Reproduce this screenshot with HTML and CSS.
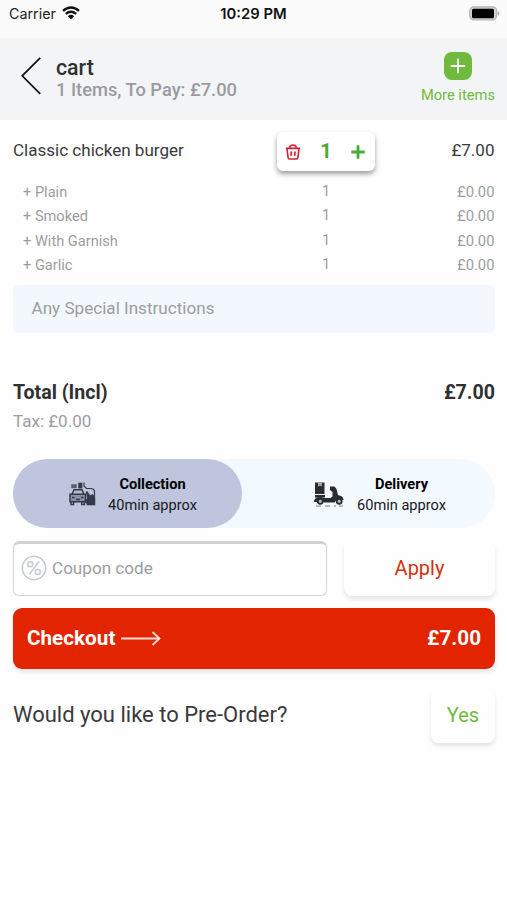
FILE: index.html
```html
<!DOCTYPE html>
<html lang="en">
<head>
<meta charset="utf-8">
<title>Cart</title>
<link rel="stylesheet" href="styles.css">
</head>
<body>
<div class="status">
  <div class="carrier"><span>Carrier</span>
    <svg width="18" height="14" viewBox="0 0 18 14" fill="none" stroke="#111" stroke-width="2.3"><path d="M1 4.9Q9-2 17 4.9M3.8 7.9Q9 3.6 14.2 7.9"/><path d="M5.9 10.2Q9 7.5 12.1 10.2L9 13.4Z" fill="#111" stroke="none"/></svg>
  </div>
  <time class="time">10:29 PM</time>
  <svg class="battery" width="31" height="15" viewBox="0 0 31 15"><rect x=".8" y=".8" width="26.8" height="13.2" rx="4" fill="#cfcfcf" stroke="#b5b5b5" stroke-width="1.2"/><rect x="3" y="2.8" width="22" height="9.4" rx="1.5" fill="#000"/><path d="M28.8 5v5q1.7-.8 1.7-2.5T28.8 5" fill="#aaa"/></svg>
</div>
<header class="header">
  <svg class="back" width="20" height="38" viewBox="0 0 20 38" fill="none" stroke="#111" stroke-width="1.7"><path d="M19.2.8 1.2 18.8l18 18"/></svg>
  <div class="heading"><h1>cart</h1><p class="subtitle">1 Items, To Pay: £7.00</p></div>
  <div class="more">
    <svg width="28" height="28" viewBox="0 0 28 28"><rect width="28" height="28" rx="8" fill="#70bb3e"/><path d="M14 7.5v13M7.5 14h13" stroke="#fff" stroke-width="1.8" stroke-linecap="round"/></svg>
    <span class="more-text">More items</span>
  </div>
</header>
<main>
  <section class="item">
    <span class="item-name">Classic chicken burger</span>
    <div class="stepper">
      <svg width="16" height="16" viewBox="0 0 16 16" fill="none" stroke="#cf2334" stroke-width="1.6" stroke-linejoin="round"><path d="M.8 4.4h14.4M4.4 4.2Q4.8 1 8 1t3.6 3.2M2 4.6l1.1 9q.2 1.4 1.5 1.4h6.8q1.3 0 1.5-1.4l1.1-9"/><path d="M6.2 7.6v4.2M9.8 7.6v4.2" stroke-width="1.8"/></svg>
      <b class="count">1</b>
      <svg width="14" height="14" viewBox="0 0 14 14"><path d="M7 .3v13.4M.3 7h13.4" stroke="#4eaa37" stroke-width="2.8"/></svg>
    </div>
    <span class="item-price">£7.00</span>
  </section>
  <ul class="extras">
    <li><span>+ Plain</span><span class="qty">1</span><span class="extra-price">£0.00</span></li>
    <li><span>+ Smoked</span><span class="qty">1</span><span class="extra-price">£0.00</span></li>
    <li><span>+ With Garnish</span><span class="qty">1</span><span class="extra-price">£0.00</span></li>
    <li><span>+ Garlic</span><span class="qty">1</span><span class="extra-price">£0.00</span></li>
  </ul>
  <div class="instructions"><span>Any Special Instructions</span></div>
  <div class="total"><span class="total-label">Total (Incl)</span><span class="total-price">£7.00</span></div>
  <div class="tax"><span>Tax: £0.00</span></div>
  <div class="modes">
    <div class="mode collection">
      <svg width="27" height="24" viewBox="0 0 27 24" fill="none" stroke="#353a49" stroke-width="1.5"><path d="M3 12.2 5 7.8h8l2 4.4" fill="#b4bbd0"/><path d="M1 12.2h15.5v7.5H1Z" fill="#8a91a4"/><path d="M2 20v2.5h2.6V20M12.8 20v2.5h2.6V20M3 15.5h2.5M12 15.5h2.5M7 17.5h4"/><path d="M3 3h4v2.6H3Z" fill="#596072" stroke="#596072"/><path d="M10 1.5h2.6v4.2H10Z" fill="#353a49"/><path d="M15 .5v3.5l2.5 2.5h5q3 .5 3 3.5v6" stroke-width="1.2"/><path d="m17.5 9.5 3.5 5 2.5-1.5 2 3v6.5h-7l-2-4 2.5-2Z" fill="#353a49"/></svg>
      <div class="mode-text"><b class="mode-name">Collection</b><span class="mode-time">40min approx</span></div>
    </div>
    <div class="mode delivery">
      <svg width="30" height="25" viewBox="0 0 30 25"><path d="M1 .5h9.5V12H1Z" fill="#292d30"/><path d="M4 .5h3.8v4L6 3.6 4 4.5Z" fill="#a7afb5"/><path d="M1 13h10v2.5H1Z" fill="#292d30"/><path d="M16 4.5h4.5l2 2.5 1.5 6 4 1.5q1.5 1.2 1.5 3.5h-7l-2 2.5H10L9 16h7.5l2-1.5V10L16 8Z" fill="#292d30"/><path d="M0 19q1-4 6-4 5 0 5 5H0" fill="#292d30"/><circle cx="6.3" cy="19.3" r="2.5" fill="#b6bec4" stroke="#292d30" stroke-width="1.8"/><circle cx="25.2" cy="19.3" r="2.5" fill="#b6bec4" stroke="#292d30" stroke-width="1.8"/><path d="M2 24h5m4 0h5m4 0h2m3 0h4" stroke="#7d8388" stroke-width="1.1"/></svg>
      <div class="mode-text"><b class="mode-name">Delivery</b><span class="mode-time">60min approx</span></div>
    </div>
  </div>
  <div class="coupon-row">
    <div class="coupon">
      <svg width="26" height="26" viewBox="0 0 26 26" fill="none" stroke="#c5cccf" stroke-width="1.6"><circle cx="13" cy="13" r="11.7"/><path d="M18 6.5 8.3 19.5"/><circle cx="9.2" cy="9.2" r="2.5"/><circle cx="16.8" cy="17" r="2.5"/></svg>
      <span class="coupon-text">Coupon code</span>
    </div>
    <div class="apply"><span>Apply</span></div>
  </div>
  <div class="checkout">
    <span class="checkout-text">Checkout</span>
    <svg width="40" height="15" viewBox="0 0 40 15" fill="none" stroke="#ffded8" stroke-width="1.8"><path d="M0 7.5h38M31.5 1l7 6.5-7 6.5"/></svg>
    <span class="checkout-price">£7.00</span>
  </div>
  <div class="preorder"><span class="question">Would you like to Pre-Order?</span><div class="yes"><span>Yes</span></div></div>
</main>
</body>
</html>
```
FILE: styles.css
```css
* { box-sizing: border-box; }
body { margin: 0; height: 900px; background: #fefefe; font-family: Roboto, sans-serif; color: #3a3a3c; overflow: hidden; line-height: 1; white-space: nowrap; }
h1, p, ul { margin: 0; padding: 0; }
svg { display: block; flex: none; }
.status { height: 38px; padding: 0 7px 10px 9px; display: grid; grid-template-columns: 1fr auto 1fr; align-items: center; background: #fbfbfb; font-family: Inter, sans-serif; color: #222; }
.carrier { display: flex; align-items: center; gap: 6px; font-size: 14.3px; }
.carrier svg { margin-top: -2px; }
.time { font-size: 14.8px; font-weight: 600; color: #111; margin-right: 2px; }
.battery { justify-self: end; margin-top: -2px; }
.header { height: 82px; background: #f2f4f6; display: flex; padding: 0 12px 0 21px; }
.back { margin-top: 19px; }
.heading { margin: 19px auto 0 15px; }
h1 { font-size: 21.3px; font-weight: 500; line-height: 22px; color: #303033; }
.subtitle { font-size: 18.3px; line-height: 21px; font-weight: 500; color: #9b9b9f; }
.more { display: flex; flex-direction: column; align-items: center; padding-top: 14px; color: #70bb3e; font-size: 14.7px; }
.more-text { margin-top: 8px; }
main { padding: 0 12px 0 13px; }
.item { height: 60px; display: grid; grid-template-columns: 264px 98px 1fr; align-items: center; font-size: 17.05px; }
.item-name, .item-price { padding-top: 2px; }
.stepper { height: 39px; margin-top: 3px; padding: 1px 10px 0 8px; border-radius: 6px; background: #fff; box-shadow: 0 3px 5px rgba(0,0,0,.38); display: flex; align-items: center; justify-content: space-between; color: #4eaa37; }
.count { font-size: 20px; margin-top: -2px; }
.item-price { text-align: right; padding-right: .5px; }
.extras { list-style: none; height: 98px; color: #9d9d9f; font-size: 14.6px; }
.extras li { height: 24.5px; padding-left: 10px; display: grid; grid-template-columns: 283px 40px 1fr; align-items: center; }
.qty { text-align: center; margin-top: -2px; }
.extra-price { text-align: right; padding-right: .5px; font-size: 14.8px; }
.instructions { height: 48px; margin-top: 7px; padding: 0 0 1px 18.5px; border-radius: 6px; background: #f2f8fe; display: flex; align-items: center; color: #9d9da1; font-size: 17.1px; }
.total { margin-top: 48px; height: 24px; display: flex; align-items: center; justify-content: space-between; font-weight: 700; font-size: 19.6px; color: #303033; }
.tax { margin-top: 3px; height: 26px; display: flex; align-items: center; color: #9d9da1; font-size: 17px; }
.modes { height: 69px; margin-top: 25px; display: flex; border-radius: 35px; background: #f2f9ff; }
.mode { display: flex; align-items: center; }
.collection { width: 229px; padding-left: 56px; gap: 12px; border-radius: 35px; background: #bfc5dc; }
.delivery { padding-left: 72px; gap: 13px; }
.mode svg { margin-top: 1px; }
.mode-text { display: flex; flex-direction: column; align-items: center; padding-top: 2px; color: #17191e; font-size: 14.6px; line-height: 21px; }
.mode-name { color: #000; }
.coupon-row { margin-top: 13px; height: 55px; display: flex; justify-content: space-between; }
.coupon { width: 314px; border: 1px solid #d3d5d7; border-top: 3px solid #d0d2d3; border-radius: 6px; padding: 0 7px 3px; display: flex; align-items: center; gap: 5px; color: #9d9da1; font-size: 17.1px; }
.coupon-text { padding-top: 2px; }
.apply { width: 151px; padding-bottom: 2px; border-radius: 8px; box-shadow: 0 3px 4px rgba(60,70,80,.14); display: flex; align-items: center; justify-content: center; color: #d3310e; font-size: 20px; }
.checkout { height: 61px; margin-top: 12px; padding: 0 14px; border-radius: 9px; background: #e22400; box-shadow: 0 3px 4px rgba(50,70,80,.14); display: flex; align-items: center; color: #fff; font-size: 20.7px; font-weight: 700; }
.checkout svg { margin-left: 6px; }
.checkout-price { margin-left: auto; }
.preorder { height: 53px; margin-top: 21px; display: flex; justify-content: space-between; }
.question { font-size: 22px; line-height: 49px; }
.yes { width: 64px; padding-bottom: 4px; border-radius: 8px; box-shadow: 0 3px 4px rgba(60,70,80,.14); display: flex; align-items: center; justify-content: center; color: #70bb3e; font-size: 20px; }
```
